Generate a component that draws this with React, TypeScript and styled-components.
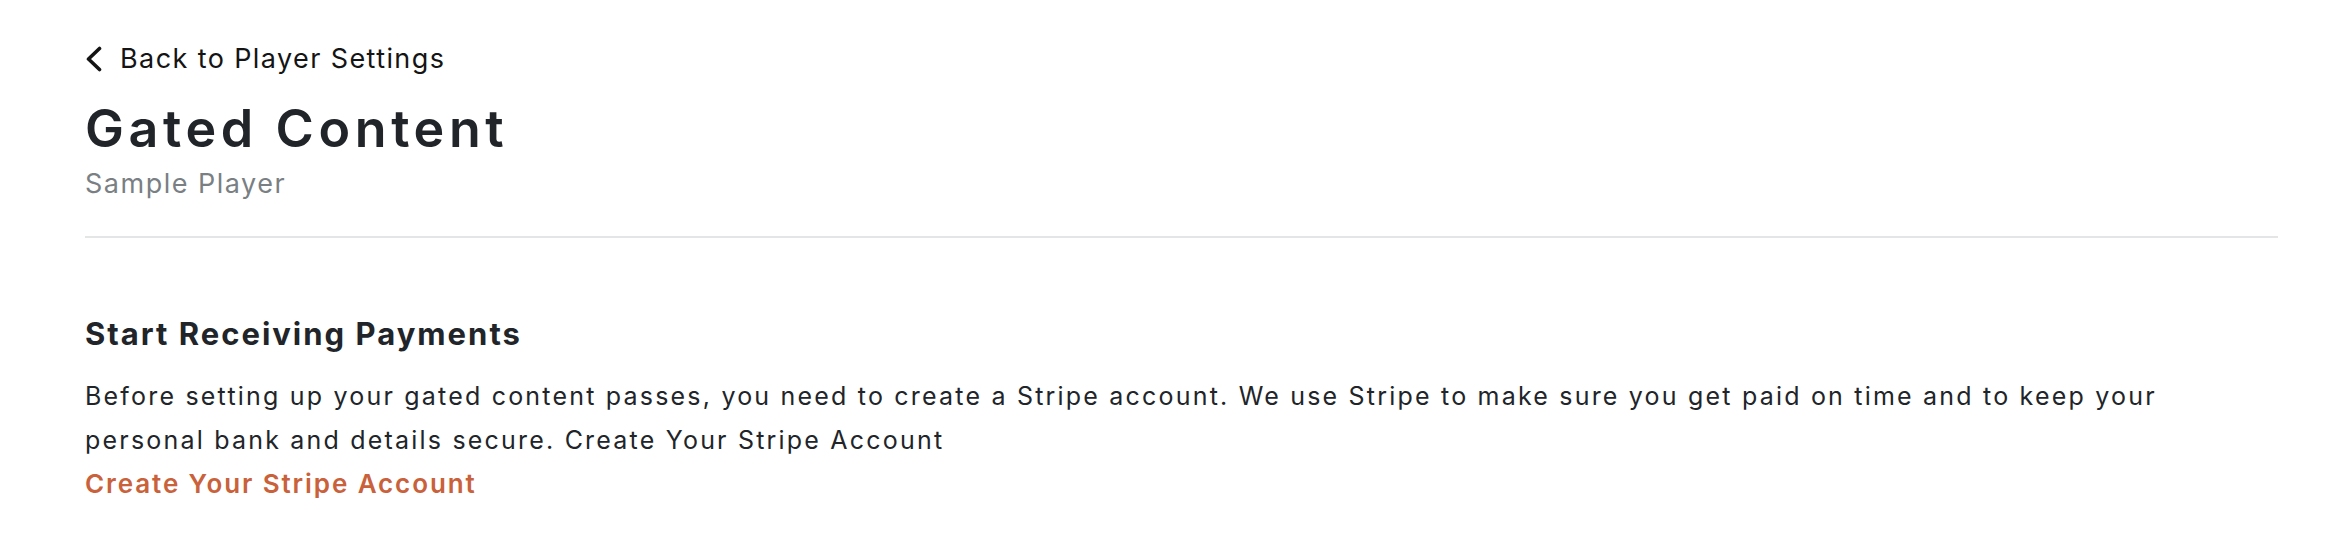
import React from 'react'
import styled, { createGlobalStyle } from 'styled-components'

const GlobalStyle = createGlobalStyle`
  html, body {
    margin: 0;
    padding: 0;
    background: #ffffff;
  }
  body {
    font-family: Inter, 'Open Sans', sans-serif;
    color: #212529;
  }
`

const Page = styled.main`
  padding: 43px 62px 0 85px;
`

const BackLink = styled.a`
  display: flex;
  align-items: center;
  gap: 17px;
  height: 32px;
  font-size: 27px;
  line-height: 32px;
  font-weight: 400;
  letter-spacing: 1.4px;
  color: #141414;
  text-decoration: none;
  cursor: pointer;
`

const Chevron = styled.svg`
  flex: none;
`

const Title = styled.h1`
  margin: 24px 0 0;
  font-size: 52px;
  line-height: 60px;
  font-weight: 600;
  letter-spacing: 4.6px;
  color: #212529;
`

const Subtitle = styled.div`
  margin-top: 9px;
  font-size: 27px;
  line-height: 32px;
  font-weight: 400;
  letter-spacing: 1.5px;
  color: #7a7f84;
`

const Divider = styled.hr`
  margin: 36px 0 0;
  border: none;
  height: 2px;
  background: #e4e5e6;
`

const Section = styled.section`
  padding-top: 77px;
`

const SectionTitle = styled.h2`
  margin: 0;
  font-size: 31px;
  line-height: 38px;
  font-weight: 700;
  letter-spacing: 2px;
  color: #212529;
`

const Paragraph = styled.p`
  margin: 21px 0 0;
  max-width: 2150px;
  font-size: 25px;
  line-height: 44px;
  font-weight: 400;
  letter-spacing: 2.2px;
  color: #212529;
`

const StripeLink = styled.a`
  display: block;
  margin-top: 4px;
  font-size: 26px;
  line-height: 36px;
  font-weight: 600;
  letter-spacing: 1.9px;
  color: #c9613b;
  text-decoration: none;
  cursor: pointer;
`

export default function App() {
  return (
    <>
      <GlobalStyle />
      <Page>
        <BackLink>
          <Chevron width="18" height="26" viewBox="0 0 18 26" fill="none">
            <polyline
              points="14.5,2.5 3.5,13 14.5,23.5"
              stroke="#141414"
              strokeWidth="3.6"
              strokeLinecap="round"
              strokeLinejoin="round"
            />
          </Chevron>
          Back to Player Settings
        </BackLink>
        <Title>Gated Content</Title>
        <Subtitle>Sample Player</Subtitle>
        <Divider />
        <Section>
          <SectionTitle>Start Receiving Payments</SectionTitle>
          <Paragraph>
            Before setting up your gated content passes, you need to create a
            Stripe account. We use Stripe to make sure you get paid on time and
            to keep your personal bank and details secure. Create Your Stripe
            Account
          </Paragraph>
          <StripeLink>Create Your Stripe Account</StripeLink>
        </Section>
      </Page>
    </>
  )
}
